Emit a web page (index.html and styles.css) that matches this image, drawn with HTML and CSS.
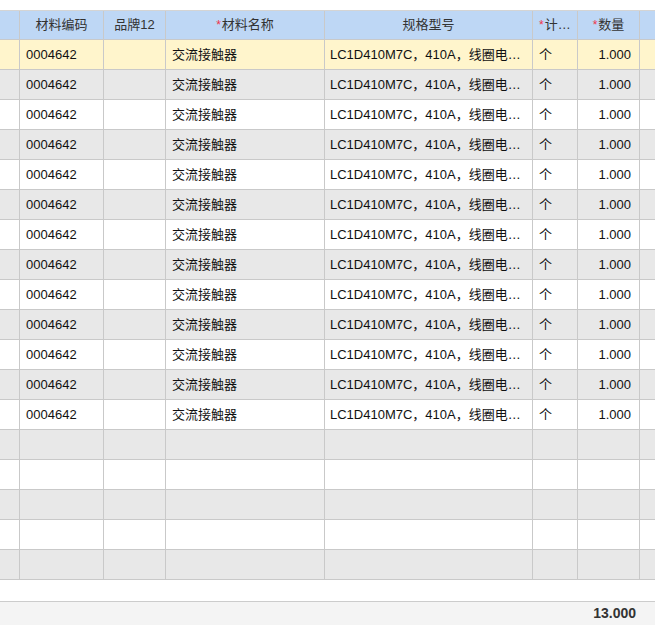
FILE: index.html
```html
<!DOCTYPE html>
<html lang="zh-CN">
<head>
<meta charset="utf-8">
<title>物料明细</title>
<link rel="stylesheet" href="styles.css">
</head>
<body>
<div class="grid">
  <div class="row head">
    <div class="cell"></div>
    <div class="cell c">材料编码</div>
    <div class="cell c">品牌12</div>
    <div class="cell c"><span class="req">*</span>材料名称</div>
    <div class="cell c">规格型号</div>
    <div class="cell c tight"><span class="req">*</span>计量单位</div>
    <div class="cell c"><span class="req">*</span>数量</div>
    <div class="cell"></div>
  </div>
  <div class="row sel">
    <div class="cell"></div><div class="cell">0004642</div><div class="cell"></div><div class="cell">交流接触器</div><div class="cell spec">LC1D410M7C，410A，线圈电压AC220V</div><div class="cell">个</div><div class="cell r">1.000</div><div class="cell"></div>
  </div>
  <div class="row alt">
    <div class="cell"></div><div class="cell">0004642</div><div class="cell"></div><div class="cell">交流接触器</div><div class="cell spec">LC1D410M7C，410A，线圈电压AC220V</div><div class="cell">个</div><div class="cell r">1.000</div><div class="cell"></div>
  </div>
  <div class="row">
    <div class="cell"></div><div class="cell">0004642</div><div class="cell"></div><div class="cell">交流接触器</div><div class="cell spec">LC1D410M7C，410A，线圈电压AC220V</div><div class="cell">个</div><div class="cell r">1.000</div><div class="cell"></div>
  </div>
  <div class="row alt">
    <div class="cell"></div><div class="cell">0004642</div><div class="cell"></div><div class="cell">交流接触器</div><div class="cell spec">LC1D410M7C，410A，线圈电压AC220V</div><div class="cell">个</div><div class="cell r">1.000</div><div class="cell"></div>
  </div>
  <div class="row">
    <div class="cell"></div><div class="cell">0004642</div><div class="cell"></div><div class="cell">交流接触器</div><div class="cell spec">LC1D410M7C，410A，线圈电压AC220V</div><div class="cell">个</div><div class="cell r">1.000</div><div class="cell"></div>
  </div>
  <div class="row alt">
    <div class="cell"></div><div class="cell">0004642</div><div class="cell"></div><div class="cell">交流接触器</div><div class="cell spec">LC1D410M7C，410A，线圈电压AC220V</div><div class="cell">个</div><div class="cell r">1.000</div><div class="cell"></div>
  </div>
  <div class="row">
    <div class="cell"></div><div class="cell">0004642</div><div class="cell"></div><div class="cell">交流接触器</div><div class="cell spec">LC1D410M7C，410A，线圈电压AC220V</div><div class="cell">个</div><div class="cell r">1.000</div><div class="cell"></div>
  </div>
  <div class="row alt">
    <div class="cell"></div><div class="cell">0004642</div><div class="cell"></div><div class="cell">交流接触器</div><div class="cell spec">LC1D410M7C，410A，线圈电压AC220V</div><div class="cell">个</div><div class="cell r">1.000</div><div class="cell"></div>
  </div>
  <div class="row">
    <div class="cell"></div><div class="cell">0004642</div><div class="cell"></div><div class="cell">交流接触器</div><div class="cell spec">LC1D410M7C，410A，线圈电压AC220V</div><div class="cell">个</div><div class="cell r">1.000</div><div class="cell"></div>
  </div>
  <div class="row alt">
    <div class="cell"></div><div class="cell">0004642</div><div class="cell"></div><div class="cell">交流接触器</div><div class="cell spec">LC1D410M7C，410A，线圈电压AC220V</div><div class="cell">个</div><div class="cell r">1.000</div><div class="cell"></div>
  </div>
  <div class="row">
    <div class="cell"></div><div class="cell">0004642</div><div class="cell"></div><div class="cell">交流接触器</div><div class="cell spec">LC1D410M7C，410A，线圈电压AC220V</div><div class="cell">个</div><div class="cell r">1.000</div><div class="cell"></div>
  </div>
  <div class="row alt">
    <div class="cell"></div><div class="cell">0004642</div><div class="cell"></div><div class="cell">交流接触器</div><div class="cell spec">LC1D410M7C，410A，线圈电压AC220V</div><div class="cell">个</div><div class="cell r">1.000</div><div class="cell"></div>
  </div>
  <div class="row">
    <div class="cell"></div><div class="cell">0004642</div><div class="cell"></div><div class="cell">交流接触器</div><div class="cell spec">LC1D410M7C，410A，线圈电压AC220V</div><div class="cell">个</div><div class="cell r">1.000</div><div class="cell"></div>
  </div>
  <div class="row alt">
    <div class="cell"></div><div class="cell"></div><div class="cell"></div><div class="cell"></div><div class="cell"></div><div class="cell"></div><div class="cell"></div><div class="cell"></div>
  </div>
  <div class="row">
    <div class="cell"></div><div class="cell"></div><div class="cell"></div><div class="cell"></div><div class="cell"></div><div class="cell"></div><div class="cell"></div><div class="cell"></div>
  </div>
  <div class="row alt">
    <div class="cell"></div><div class="cell"></div><div class="cell"></div><div class="cell"></div><div class="cell"></div><div class="cell"></div><div class="cell"></div><div class="cell"></div>
  </div>
  <div class="row">
    <div class="cell"></div><div class="cell"></div><div class="cell"></div><div class="cell"></div><div class="cell"></div><div class="cell"></div><div class="cell"></div><div class="cell"></div>
  </div>
  <div class="row alt">
    <div class="cell"></div><div class="cell"></div><div class="cell"></div><div class="cell"></div><div class="cell"></div><div class="cell"></div><div class="cell"></div><div class="cell"></div>
  </div>
</div>
<div class="footer">
  <span class="total">13.000</span>
</div>
</body>
</html>
```

FILE: styles.css
```css
html, body {
  margin: 0;
  padding: 0;
  background: #ffffff;
}

body {
  font-family: "Liberation Sans", "Noto Sans CJK SC", sans-serif;
  font-size: 13px;
  color: #111111;
  overflow: hidden;
}

.grid {
  padding-top: 10px;
}

.row {
  display: grid;
  grid-template-columns: 20px 84px 62px 159px 208px 45px 62px 40px;
  height: 30px;
  box-sizing: border-box;
  border-bottom: 1px solid #c9c9c9;
  background: #ffffff;
}

.row.alt {
  background: #e8e8e8;
}

.row.sel {
  background: #fff5cc;
}

.row.head {
  background: #bed7f5;
  border-top: 1px solid #d4d4d4;
  color: #333333;
}

.cell {
  box-sizing: border-box;
  border-right: 1px solid #c9c9c9;
  padding: 0 6px;
  line-height: 29px;
  white-space: nowrap;
  overflow: hidden;
  text-overflow: ellipsis;
}

.cell.spec {
  padding-left: 5px;
}

.head .cell {
  line-height: 28px;
}

.cell.c {
  text-align: center;
}

.cell.tight {
  padding: 0 4px 0 6px;
}

.cell.r {
  text-align: right;
  padding-right: 8px;
}

.req {
  color: #f0344a;
  font-size: 12px;
  margin-right: 1px;
}

.footer {
  margin-top: 21px;
  height: 24px;
  box-sizing: border-box;
  border-top: 1px solid #cccccc;
  background: #f4f4f4;
  text-align: right;
  padding-right: 19px;
  line-height: 23px;
}

.total {
  font-weight: bold;
  font-size: 14px;
  color: #333333;
}
```
